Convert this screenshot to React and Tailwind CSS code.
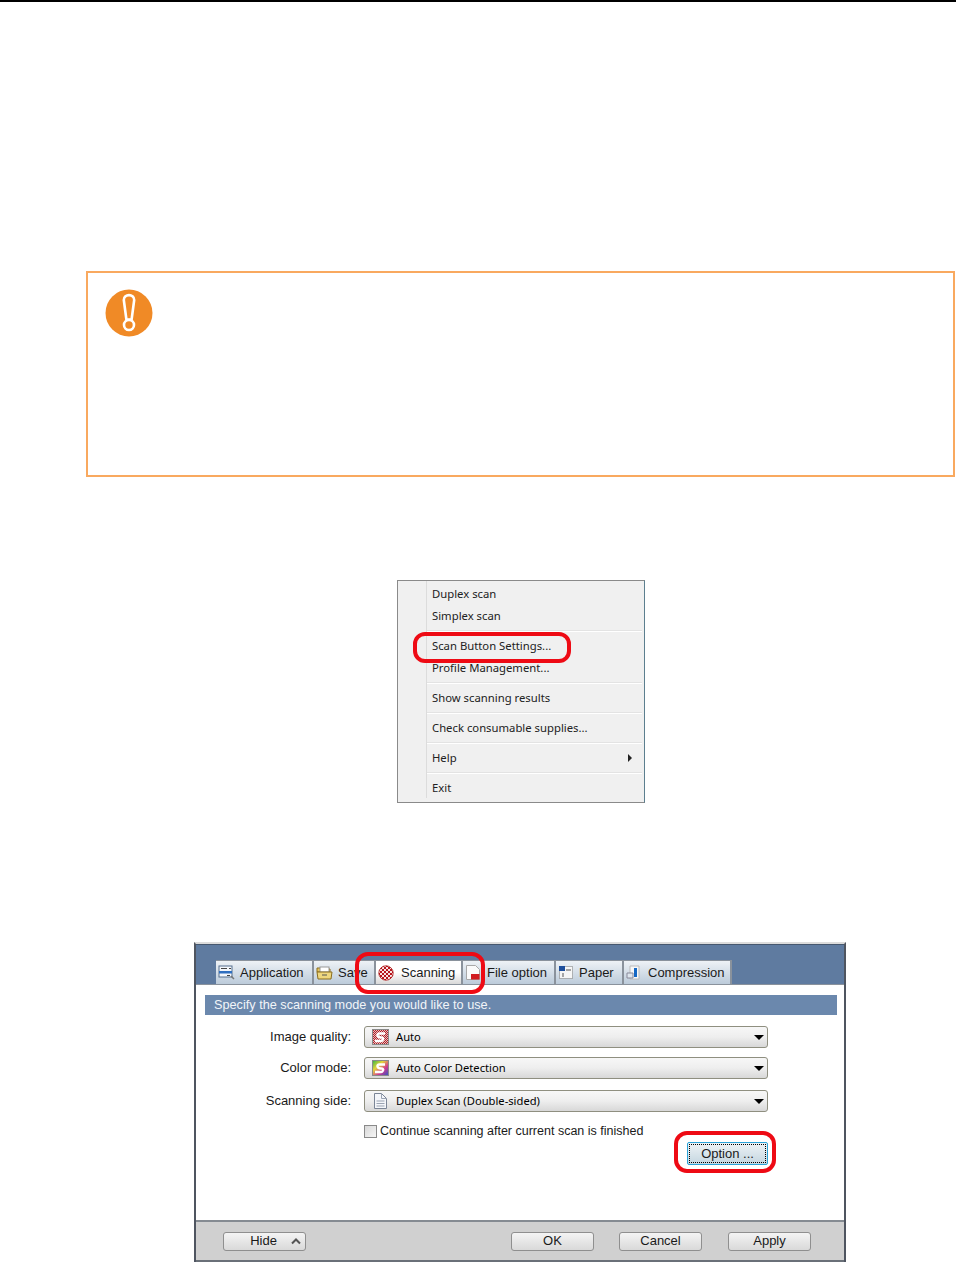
import React from 'react';

const menuFont = "font-['Noto_Sans',sans-serif]";
const dlgFont = "font-['Liberation_Sans',Arial,sans-serif]";

const WarnIcon = () => (
  <svg width="48" height="48" viewBox="0 0 48 48">
    <circle cx="24" cy="24" r="23.5" fill="#F08A26" />
    <path d="M18.8 9.5 C18.8 3 29.2 3 29.2 9.5 L26.6 29 L21.4 29 Z" transform="translate(0 1.5)" fill="none" stroke="#fff" strokeWidth="2.6" strokeLinejoin="round" />
    <circle cx="24" cy="36" r="5" fill="none" stroke="#fff" strokeWidth="2.6" />
  </svg>
);

const AppIcon = () => (
  <svg width="17" height="15" viewBox="0 0 17 15">
    <rect x="1" y="1" width="13" height="11" fill="#f4f7fb" stroke="#56708f" />
    <rect x="1" y="6" width="13" height="2.5" fill="#2f6fc0" />
    <path d="M3 3.5h6M11 3.5h2M9 10.5h3" stroke="#444" />
    <path d="M13 11l3 3" stroke="#777" strokeWidth="1.5" />
  </svg>
);
const SaveIcon = () => (
  <svg width="17" height="15" viewBox="0 0 17 15">
    <path d="M1 3h5l1 1h7v3H1z" fill="#e8c65a" stroke="#8a6d1e" />
    <rect x="4" y="2" width="9" height="5" fill="#fff" stroke="#999" />
    <path d="M1 7h15l-1 7H2z" fill="#efd77e" stroke="#8a6d1e" />
    <path d="M6 10h5" stroke="#555" />
  </svg>
);
const ScanningIcon = () => (
  <svg width="16" height="16" viewBox="0 0 16 16">
    <defs>
      <pattern id="chk" width="4" height="4" patternUnits="userSpaceOnUse">
        <rect width="4" height="4" fill="#f7e4e4" />
        <rect width="2" height="2" fill="#b8141c" />
        <rect x="2" y="2" width="2" height="2" fill="#b8141c" />
      </pattern>
    </defs>
    <circle cx="8" cy="8" r="7.2" fill="url(#chk)" stroke="#a11" strokeWidth="0.8" />
  </svg>
);
const FileIcon = () => (
  <svg width="16" height="17" viewBox="0 0 16 17">
    <path d="M1.5 1.5h9l4 4v10h-13z" fill="#fafafa" stroke="#a8a8a8" />
    <rect x="6" y="10" width="8.5" height="5.5" fill="#d01c20" />
  </svg>
);
const PaperIcon = () => (
  <svg width="16" height="15" viewBox="0 0 16 15">
    <rect x="1.5" y="1.5" width="13" height="12" fill="#f6f6f6" stroke="#777" strokeDasharray="1 1" />
    <rect x="1" y="1" width="6" height="5" fill="#1f4f9c" />
    <path d="M8 5h5M5 8v4" stroke="#555" />
  </svg>
);
const CompressIcon = () => (
  <svg width="16" height="15" viewBox="0 0 16 15">
    <path d="M4 1h9v13H4z" fill="#f7f7f7" stroke="#bbb" />
    <path d="M1 8h6v5H1z" fill="#dfe6ee" stroke="#889" />
    <rect x="8" y="3" width="3" height="9" fill="#1668c4" />
  </svg>
);

const tabs = [
  { label: 'Application', icon: <AppIcon />, width: 'w-[98px]', text: 'ml-[5px]' },
  { label: 'Save', icon: <SaveIcon />, width: 'w-[62px]', text: 'ml-[5px]' },
  { label: 'Scanning', icon: <ScanningIcon />, width: 'w-[87px]', text: 'ml-[7px]', active: true },
  { label: 'File option', icon: <FileIcon />, width: 'w-[93px]', text: 'ml-[6px]' },
  { label: 'Paper', icon: <PaperIcon />, width: 'w-[68px]', text: 'ml-[5px]' },
  { label: 'Compression', icon: <CompressIcon />, width: 'w-[108px]', text: 'ml-[6px]' },
];

const MenuRow = ({ label, arrow }) => (
  <div className="h-[22px] flex items-center pl-[34px] pr-[12px] justify-between">
    <span>{label}</span>
    {arrow && <span className="w-0 h-0 border-y-[4px] border-y-transparent border-l-[4px] border-l-[#222]" />}
  </div>
);

const MenuSep = () => <div className="h-[2px] ml-[29px] my-[3px] mr-[2px] bg-[#e3e3e3] border-b border-white" />;

const ScanIcon = ({ colored }) => (
  <svg width="17" height="16" viewBox="0 0 17 16">
    <defs>
      <linearGradient id="rainbow" x1="0" y1="0" x2="1" y2="1">
        <stop offset="0" stopColor="#2fb344" />
        <stop offset="0.35" stopColor="#e5d53a" />
        <stop offset="0.65" stopColor="#d23a8c" />
        <stop offset="1" stopColor="#2a53c8" />
      </linearGradient>
      <pattern id="redchk" width="2" height="2" patternUnits="userSpaceOnUse">
        <rect width="2" height="2" fill="#e6bcbc" />
        <rect width="1" height="1" fill="#b02028" />
        <rect x="1" y="1" width="1" height="1" fill="#b02028" />
      </pattern>
    </defs>
    <rect x="0.5" y="0.5" width="16" height="15" fill={colored ? 'url(#rainbow)' : 'url(#redchk)'} stroke="#8a8a8a" />
    <path d="M13 4.5H7.5Q5 4.5 5.5 6.5T9 8.5T11 10.5T8.5 12H3" fill="none" stroke="#fff" strokeWidth="2.4" />
  </svg>
);

const DocIcon = () => (
  <svg width="17" height="16" viewBox="0 0 17 16">
    <path d="M2.5 0.5h7l5 5v10h-12z" fill="#f4f6fa" stroke="#7b8596" />
    <path d="M9.5 0.5v5h5M4.5 8h8M4.5 10.5h8M4.5 13h8" fill="none" stroke="#9aa3b2" />
  </svg>
);

const fields = [
  { label: 'Image quality:', value: 'Auto', icon: <ScanIcon />, mb: 'mb-[9px]' },
  { label: 'Color mode:', value: 'Auto Color Detection', icon: <ScanIcon colored />, mb: 'mb-[11px]' },
  { label: 'Scanning side:', value: 'Duplex Scan (Double-sided)', icon: <DocIcon />, mb: 'mb-[10px]' },
];

const FooterButton = ({ label, width = 'w-[83px]', children }) => (
  <div className={`${width} h-[19px] rounded-[3px] border border-[#8f8f8f] bg-linear-to-b from-[#f4f4f4] to-[#d9d9d9] flex items-center justify-center text-[13px] text-[#1a1a1a]`}>
    {label}
    {children}
  </div>
);

export default function App() {
  return (
    <div className="w-[956px] h-[1262px] bg-white overflow-hidden border-t-2 border-black">
      {/* Callout */}
      <div className="ml-[86px] mt-[269px] w-[869px] h-[206px] border-2 border-[#F9A95F] pl-[17px] pt-[16px]">
        <WarnIcon />
      </div>

      {/* Context menu */}
      <div className={`${menuFont} relative ml-[397px] mt-[103px] w-[248px] h-[223px] border border-[#8a8a8a] border-r-[#5c7f8f] bg-[#f0f0f0] text-[11.3px] text-[#222] pt-[2px]`}>
        <div className="absolute left-[28px] top-0 bottom-[4px] w-px bg-[#dcdcdc]" />
        <MenuRow label="Duplex scan" />
        <MenuRow label="Simplex scan" />
        <MenuSep />
        <MenuRow label="Scan Button Settings..." />
        <MenuRow label="Profile Management..." />
        <MenuSep />
        <MenuRow label="Show scanning results" />
        <MenuSep />
        <MenuRow label="Check consumable supplies..." />
        <MenuSep />
        <MenuRow label="Help" arrow />
        <MenuSep />
        <MenuRow label="Exit" />
        <div className="absolute left-[15px] top-[51px] w-[158px] h-[31px] rounded-[12px] border-[4px] border-[#EE0A14]" />
      </div>

      {/* Dialog */}
      <div className={`${dlgFont} relative ml-[194px] mt-[139px] w-[652px] h-[320px] border-x-2 border-x-[#4f5560] border-t-2 border-t-[#dcdcdc] text-[13px] text-[#1a1a1a] flex flex-col`}>
        <div className="h-[40px] bg-[#5f7ba0] border-t border-[#46586f] flex items-end pl-[20px] shrink-0">
          {tabs.map((tab) => (
            <div
              key={tab.label}
              className={`${tab.width} h-[24px] flex items-center pl-[2px] border-r-2 border-t border-[#8a929c] ${
                tab.active
                  ? 'bg-linear-to-b from-white via-white to-[#d8d8d8]'
                  : 'bg-linear-to-b from-[#eef2f6] to-[#bccbda]'
              }`}
            >
              {tab.icon}
              <span className={tab.text}>{tab.label}</span>
            </div>
          ))}
        </div>

        <div className="flex-1 bg-white pt-[10px] pl-[9px] pr-[7px] border-t border-[#8a929c]">
          <div className="h-[20px] bg-[#6b88ad] text-[#f2f5f9] pl-[9px] pt-[2px] flex items-center text-[12.7px]">
            Specify the scanning mode you would like to use.
          </div>
          <div className="mt-[11px]">
            {fields.map((f) => (
              <div key={f.label} className={`flex items-center ${f.mb}`}>
                <div className="w-[146px] text-right">{f.label}</div>
                <div className={`${menuFont} ml-[13px] w-[404px] h-[22px] rounded-[3px] border border-[#8f8f80] bg-linear-to-b from-[#f7f7f7] via-[#eeeeee] to-[#d8d8d8] flex items-center pl-[7px] pr-[3px] text-[11.2px] text-black`}>
                  {f.icon}
                  <span className="ml-[7px] flex-1">{f.value}</span>
                  <span className="w-0 h-0 border-x-[5px] border-x-transparent border-t-[5px] border-t-black" />
                </div>
              </div>
            ))}
          </div>
          <div className="flex items-center ml-[159px]">
            <div className="w-[13px] h-[13px] border border-[#8a8a8a] bg-linear-to-br from-[#d8d8d8] to-[#f6f6f6]" />
            <span className="ml-[3px] text-[12.5px]">Continue scanning after current scan is finished</span>
          </div>
          <div className="flex justify-end mt-[1px] mr-[69px]">
            <div className="w-[81px] h-[23px] rounded-[2px] border border-[#2aa3d8] bg-linear-to-b from-[#eef3f6] to-[#c4d6e0] p-[1px]">
              <div className="w-full h-full border border-dotted border-black flex items-center justify-center">
                Option ...
              </div>
            </div>
          </div>
        </div>

        <div className="h-[42px] bg-[#d0d0d0] border-t-2 border-t-[#858b92] border-b-2 border-b-[#6a7078] shrink-0 flex items-center pl-[27px]">
          <FooterButton label="Hide">
            <svg className="ml-[14px] -mr-[22px]" width="10" height="7" viewBox="0 0 10 7">
              <path d="M1 5.5L5 1.5L9 5.5" fill="none" stroke="#555" strokeWidth="2" />
            </svg>
          </FooterButton>
          <div className="ml-[205px]"><FooterButton label="OK" /></div>
          <div className="ml-[25px]"><FooterButton label="Cancel" /></div>
          <div className="ml-[26px]"><FooterButton label="Apply" /></div>
        </div>

        {/* red highlights */}
        <div className="absolute left-[159px] top-[8px] w-[130px] h-[42px] rounded-[13px] border-[4px] border-[#EE0A14]" />
        <div className="absolute left-[478px] top-[187px] w-[102px] h-[42px] rounded-[13px] border-[4px] border-[#EE0A14]" />
      </div>
    </div>
  );
}
